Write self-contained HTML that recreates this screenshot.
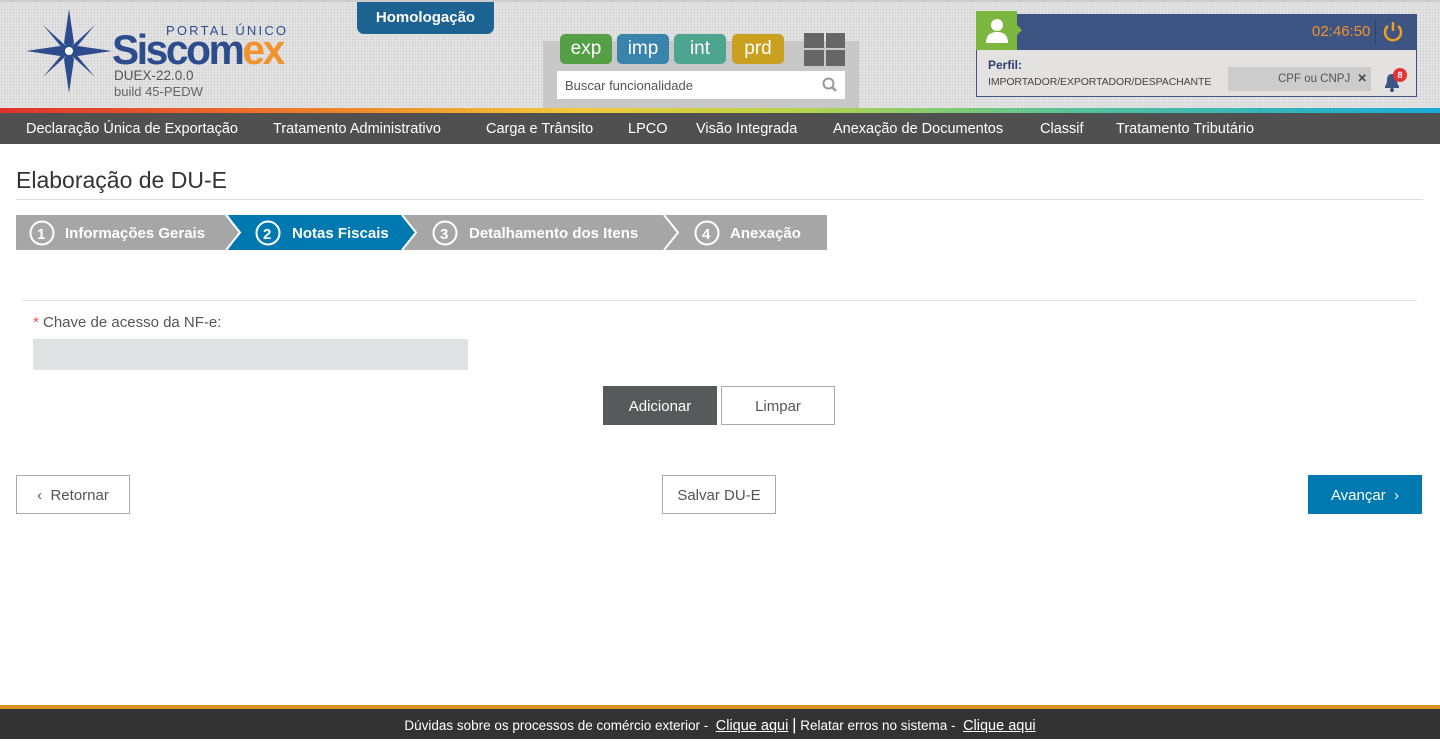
<!DOCTYPE html>
<html><head><meta charset="utf-8">
<style>
*{margin:0;padding:0;box-sizing:border-box}
body{width:1440px;height:739px;overflow:hidden;font-family:"Liberation Sans",sans-serif;background:#fff;position:relative;color:#333}
.hdr{position:absolute;left:0;top:0;width:1440px;height:108px;background-color:#e4e4e4;background-image:radial-gradient(#d2d2d2 0.8px,transparent 1px);background-size:3px 3px;border-top:2px solid #ccc}
.grad{position:absolute;top:108px;left:0;width:1440px;height:5px;background:linear-gradient(90deg,#e0302a 0%,#f08a2a 25%,#f3c93a 40%,#b8d54a 55%,#53c19a 75%,#1aa9d8 100%)}
.nav{position:absolute;top:113px;left:0;width:1440px;height:31px;background:#505050;color:#fff;font-size:14.5px}
.nav span{position:absolute;top:8px}
.abs{position:absolute;white-space:nowrap}
.pill{position:absolute;top:34px;height:30px;border-radius:5px;color:#fff;font-size:19px;text-align:center;line-height:29px}
.btn{position:absolute;font-size:15px;text-align:center;border:1px solid #aaa;background:#fff;color:#555}
</style></head><body>
<div class="hdr"></div>
<svg class="abs" style="left:26px;top:9px" width="86" height="84" viewBox="0 0 86 84">
<g fill="#2d4c8e">
<polygon points="43,0 48,34 43,42 38,34"/><polygon points="43,84 48,50 43,42 38,50"/>
<polygon points="0,42 34,37 43,42 34,47"/><polygon points="86,42 52,37 43,42 52,47"/>
<polygon points="17,16 40,37 43,42 37,40"/><polygon points="69,16 49,40 43,42 46,37"/>
<polygon points="17,68 37,44 43,42 40,47"/><polygon points="69,68 46,47 43,42 49,44"/>
</g><circle cx="43" cy="42" r="4" fill="#fff"/></svg>
<div class="abs" style="left:166px;top:23px;font-size:13px;letter-spacing:2.2px;color:#2d4c8e">PORTAL ÚNICO</div>
<div class="abs" style="left:112px;top:30px;font-size:42px;font-weight:bold;letter-spacing:-2.5px;color:#2d4c8e;line-height:40px;transform:scaleX(0.97);transform-origin:left">Siscom<span style="color:#f0922e">ex</span></div>
<div class="abs" style="left:114px;top:68px;font-size:13.5px;color:#555">DUEX-22.0.0</div>
<div class="abs" style="left:114px;top:84px;font-size:13px;color:#666">build 45-PEDW</div>
<div class="abs" style="left:357px;top:2px;width:137px;height:32px;background:#1d6391;border-radius:0 0 7px 7px;color:#fff;font-weight:bold;font-size:15px;text-align:center;line-height:32px">Homologação</div>
<div class="abs" style="left:543px;top:41px;width:316px;height:67px;background:#c8c8c8"></div>
<div class="pill" style="left:560px;width:52px;background:#55a046">exp</div>
<div class="pill" style="left:617px;width:52px;background:#3a84ac">imp</div>
<div class="pill" style="left:674px;width:52px;background:#4ea58f">int</div>
<div class="pill" style="left:732px;width:52px;background:#c9a020">prd</div>
<div class="abs" style="left:804px;top:33px;width:20px;height:15px;background:#666"></div>
<div class="abs" style="left:826px;top:33px;width:19px;height:15px;background:#666"></div>
<div class="abs" style="left:804px;top:50px;width:20px;height:16px;background:#666"></div>
<div class="abs" style="left:826px;top:50px;width:19px;height:16px;background:#666"></div>
<div class="abs" style="left:557px;top:71px;width:288px;height:28px;background:#fff;font-size:13px;color:#555;padding:7px 8px">Buscar funcionalidade</div>
<svg class="abs" style="left:822px;top:77px" width="16" height="16"><circle cx="6.5" cy="6.5" r="5" fill="none" stroke="#999" stroke-width="2"/><line x1="10" y1="10" x2="14" y2="14" stroke="#999" stroke-width="2.5"/></svg>
<div class="abs" style="left:976px;top:14px;width:441px;height:83px;border:1px solid #3e5482;background:#e4e1e1"></div>
<div class="abs" style="left:977px;top:15px;width:439px;height:35px;background:#3e5482"></div>
<div class="abs" style="left:976px;top:11px;width:41px;height:39px;background:#7bb63f"></div>
<div class="abs" style="left:1017px;top:25px;width:0;height:0;border-top:5px solid transparent;border-bottom:5px solid transparent;border-left:5px solid #7bb63f"></div>
<svg class="abs" style="left:983px;top:16px" width="28" height="28"><circle cx="14" cy="9" r="6" fill="#fff"/><path d="M3 27 Q3 16 14 16 Q25 16 25 27Z" fill="#fff"/></svg>
<div class="abs" style="left:1312px;top:23px;color:#f0922e;font-size:15px">02:46:50</div>
<div class="abs" style="left:1375px;top:20px;width:1px;height:24px;background:#2e4068"></div>
<svg class="abs" style="left:1382px;top:20px" width="22" height="22"><path d="M6 6 A8 8 0 1 0 16 6" fill="none" stroke="#f0a020" stroke-width="2.5"/><line x1="11" y1="2" x2="11" y2="11" stroke="#f0a020" stroke-width="2.5"/></svg>
<div class="abs" style="left:988px;top:58px;font-size:12px;font-weight:bold;color:#2d3f6e">Perfil:</div>
<div class="abs" style="left:988px;top:76px;font-size:10.5px;color:#444;letter-spacing:-0.1px">IMPORTADOR/EXPORTADOR/DESPACHANTE</div>
<div class="abs" style="left:1228px;top:67px;width:143px;height:24px;background:#ccc;font-size:11.5px;color:#555;padding:4px 0 0 50px">CPF ou CNPJ <b style="color:#444;margin-left:4px">✕</b></div>
<svg class="abs" style="left:1381px;top:70px" width="22" height="22"><path d="M4 18 L4 16 Q6 14 6 10 Q6 4 11 4 Q16 4 16 10 Q16 14 18 16 L18 18Z" fill="#3e5482"/><circle cx="11" cy="20" r="2" fill="#3e5482"/></svg>
<div class="abs" style="left:1393px;top:68px;width:14px;height:14px;border-radius:7px;background:#e53434;color:#fff;font-size:9px;font-weight:bold;text-align:center;line-height:14px">8</div>
<div class="grad"></div>
<div class="nav">
<span style="left:26px">Declaração Única de Exportação</span>
<span style="left:273px">Tratamento Administrativo</span>
<span style="left:486px">Carga e Trânsito</span>
<span style="left:628px">LPCO</span>
<span style="left:696px">Visão Integrada</span>
<span style="left:833px">Anexação de Documentos</span>
<span style="left:1040px">Classif</span>
<span style="left:1116px">Tratamento Tributário</span>
</div>
<div class="abs" style="left:16px;top:167px;font-size:23px;color:#333">Elaboração de DU-E</div>
<div class="abs" style="left:16px;top:199px;width:1407px;height:1px;background:#ddd"></div>
<svg class="abs" style="left:0;top:215px" width="840" height="35">
<polygon points="16,0 228,0 240,17.5 228,35 16,35" fill="#a6a6a6"/>
<polygon points="228,0 403,0 416,17.5 403,35 228,35 240,17.5" fill="#0079b0"/>
<polygon points="403,0 665,0 678,17.5 665,35 403,35 416,17.5" fill="#a6a6a6"/>
<polygon points="665,0 827,0 827,35 665,35 678,17.5" fill="#a6a6a6"/>
<g fill="none" stroke="#fff" stroke-width="2">
<polyline points="226,0 240,17.5 226,35"/><polyline points="402,0 416,17.5 402,35"/><polyline points="664,0 678,17.5 664,35"/>
<circle cx="42" cy="18" r="11.5"/><circle cx="268" cy="18" r="11.5"/><circle cx="445" cy="18" r="11.5"/><circle cx="707" cy="18" r="11.5"/>
</g>
<g fill="#fff" font-family="Liberation Sans,sans-serif" font-weight="bold" font-size="15">
<text x="37" y="24">1</text><text x="263" y="24">2</text><text x="440" y="24">3</text><text x="702" y="24">4</text>
<text x="65" y="23">Informações Gerais</text><text x="292" y="23">Notas Fiscais</text><text x="469" y="23">Detalhamento dos Itens</text><text x="730" y="23">Anexação</text>
</g></svg>
<div class="abs" style="left:22px;top:300px;width:1395px;height:1px;background:#e2e2e2"></div>
<div class="abs" style="left:33px;top:314px;font-size:15px;color:#555"><span style="color:#e55">*</span> Chave de acesso da NF-e:</div>
<div class="abs" style="left:33px;top:339px;width:435px;height:31px;background:#e0e1e3"></div>
<div class="btn" style="left:603px;top:386px;width:114px;height:39px;background:#58595b;border-color:#58595b;color:#fff;line-height:39px">Adicionar</div>
<div class="btn" style="left:721px;top:386px;width:114px;height:39px;line-height:39px">Limpar</div>
<div class="btn" style="left:16px;top:475px;width:114px;height:39px;line-height:39px">‹&nbsp;&nbsp;Retornar</div>
<div class="btn" style="left:662px;top:475px;width:114px;height:39px;line-height:39px">Salvar DU-E</div>
<div class="btn" style="left:1308px;top:475px;width:114px;height:39px;line-height:39px;background:#0079b0;border-color:#0079b0;color:#fff">Avançar&nbsp;&nbsp;›</div>
<div class="abs" style="left:0;top:705px;width:1440px;height:4px;background:#d9901f"></div>
<div class="abs" style="left:0;top:709px;width:1440px;height:30px;background:#333;color:#fff;font-size:13.5px;text-align:center;line-height:31px">Dúvidas sobre os processos de comércio exterior - &nbsp;<u style="font-size:14.5px">Clique aqui</u> <span style="font-size:17px">|</span> Relatar erros no sistema - &nbsp;<u style="font-size:14.5px">Clique aqui</u></div>
</body></html>
